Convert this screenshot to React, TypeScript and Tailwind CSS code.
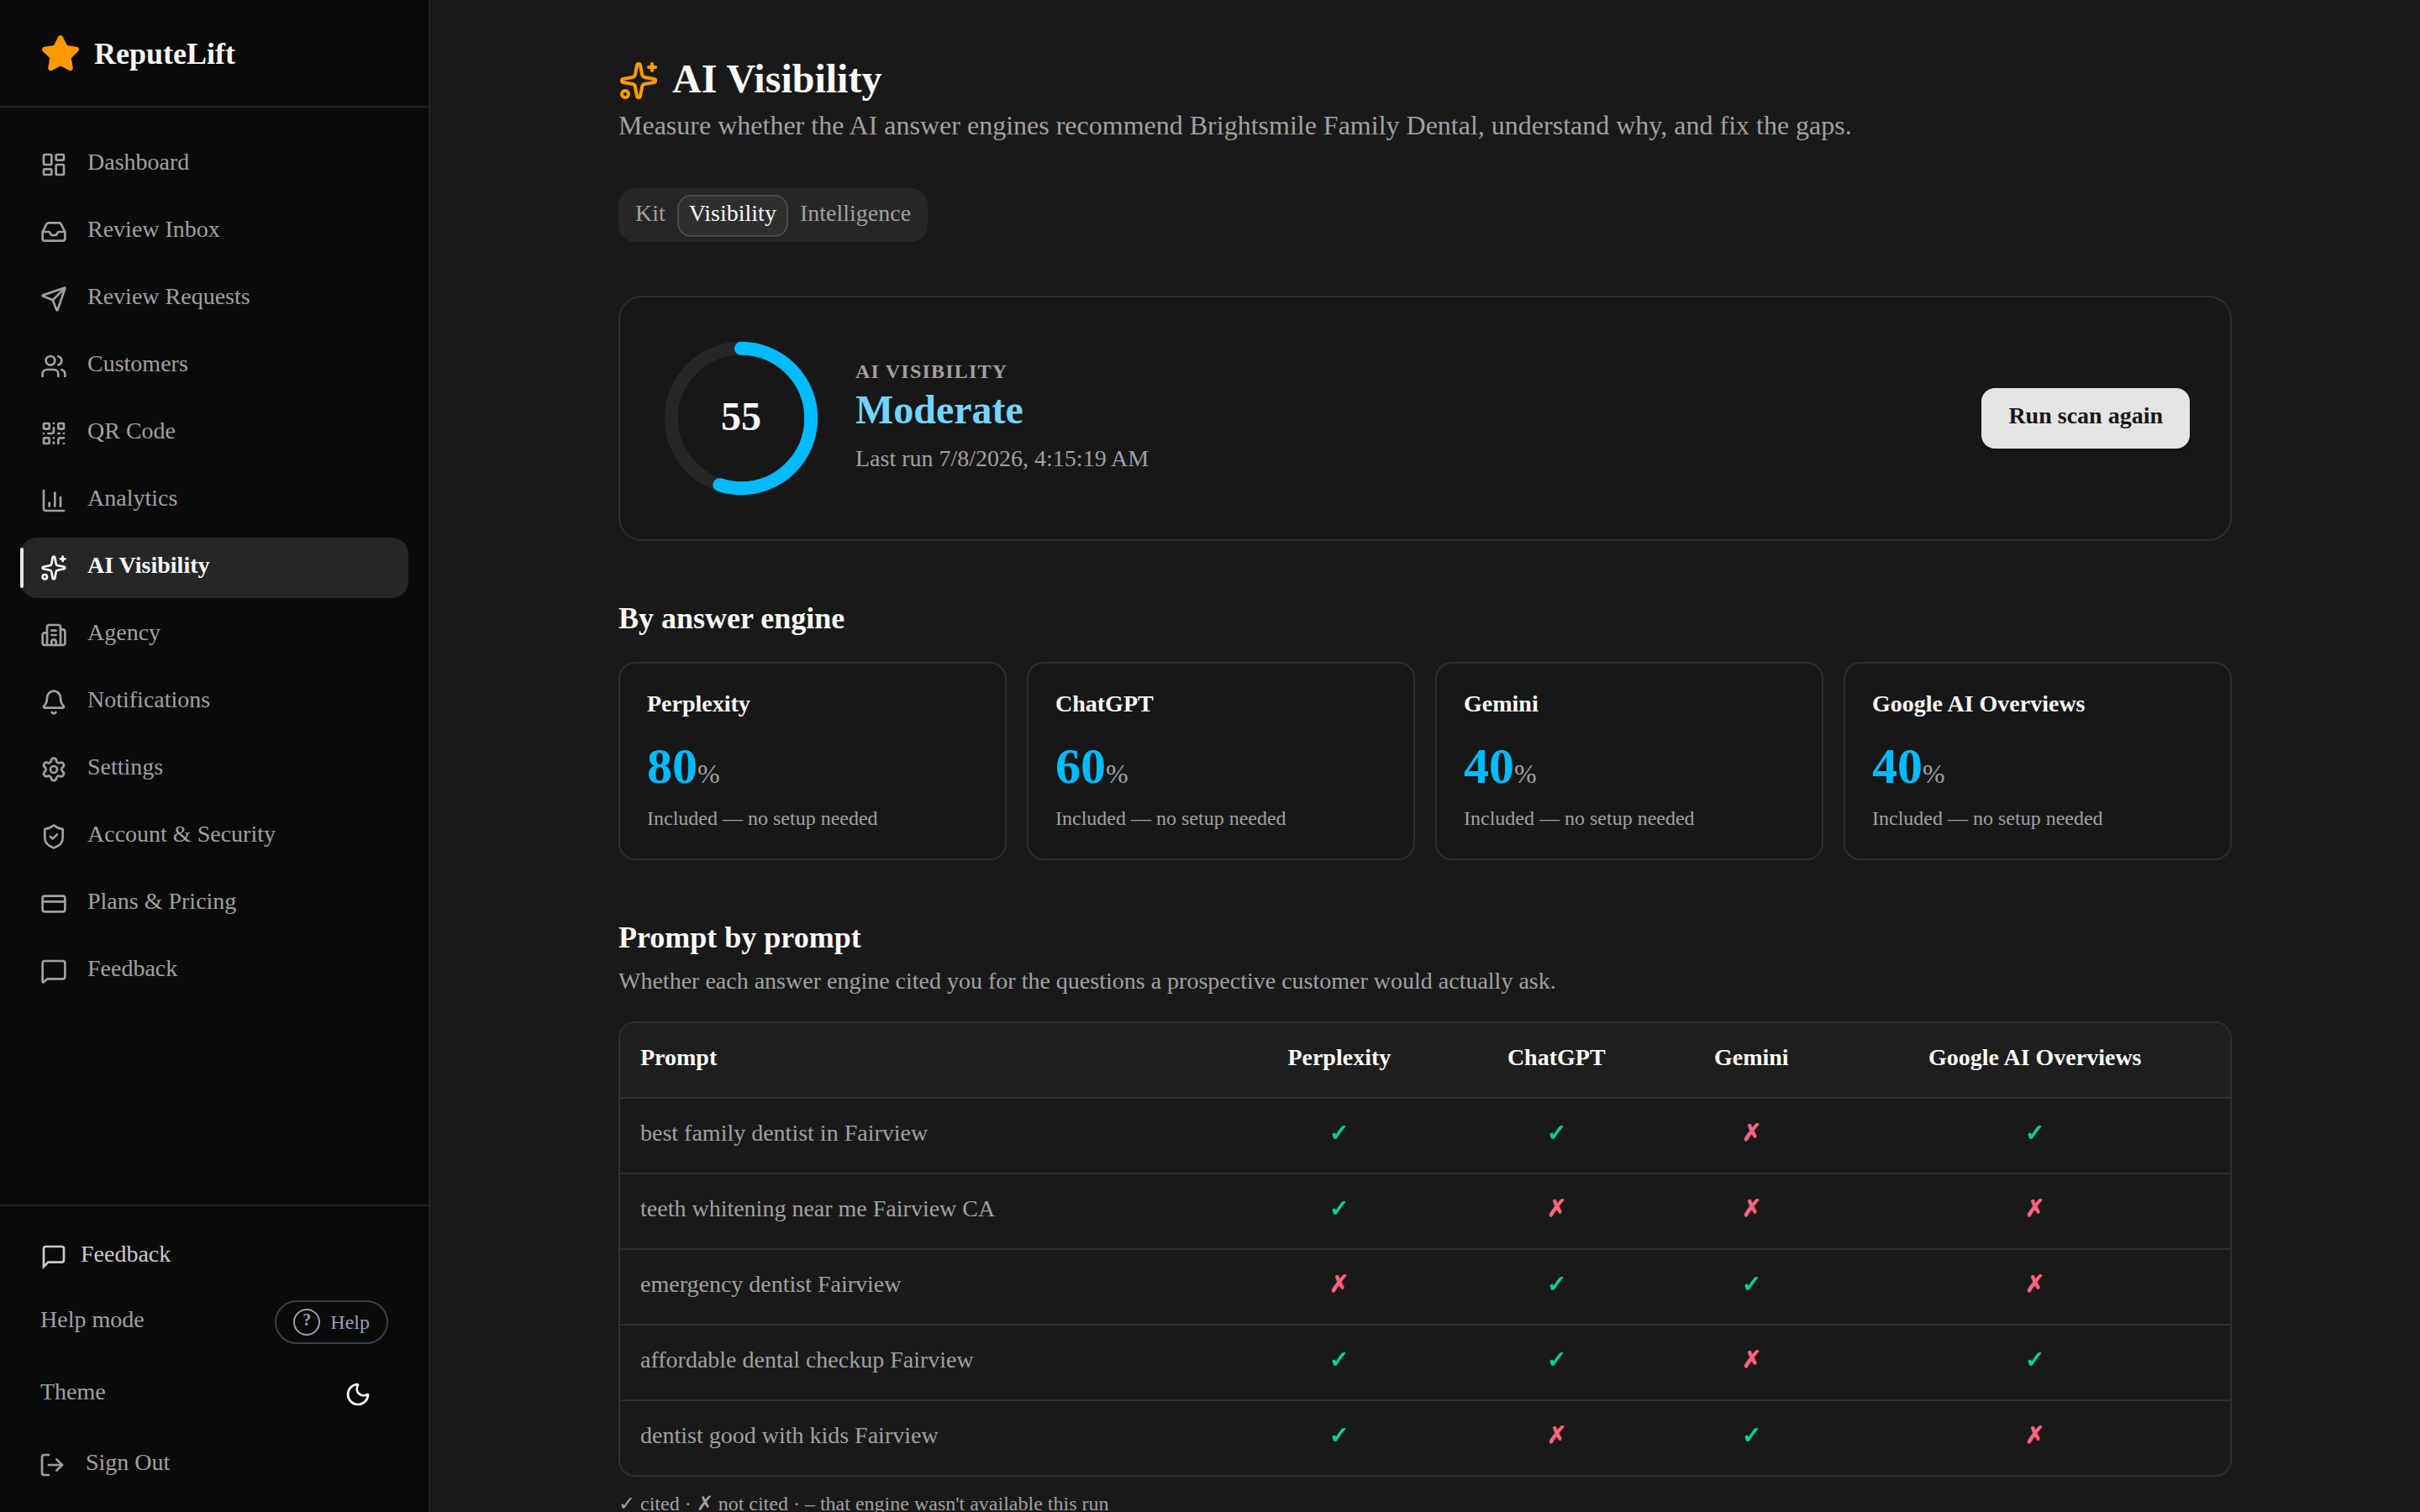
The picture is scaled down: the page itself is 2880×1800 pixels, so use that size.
import {
  Bell,
  Building2,
  ChartColumn,
  CreditCard,
  Inbox,
  LayoutDashboard,
  LogOut,
  MessageSquare,
  Moon,
  QrCode,
  Send,
  Settings,
  ShieldCheck,
  Sparkles,
  Star,
  Users,
  type LucideIcon,
} from "lucide-react";
import { clsx } from "clsx";

interface NavItem {
  label: string;
  icon: LucideIcon;
}

const navItems: NavItem[] = [
  { label: "Dashboard", icon: LayoutDashboard },
  { label: "Review Inbox", icon: Inbox },
  { label: "Review Requests", icon: Send },
  { label: "Customers", icon: Users },
  { label: "QR Code", icon: QrCode },
  { label: "Analytics", icon: ChartColumn },
  { label: "AI Visibility", icon: Sparkles },
  { label: "Agency", icon: Building2 },
  { label: "Notifications", icon: Bell },
  { label: "Settings", icon: Settings },
  { label: "Account & Security", icon: ShieldCheck },
  { label: "Plans & Pricing", icon: CreditCard },
  { label: "Feedback", icon: MessageSquare },
];

const engines = [
  { name: "Perplexity", score: 80 },
  { name: "ChatGPT", score: 60 },
  { name: "Gemini", score: 40 },
  { name: "Google AI Overviews", score: 40 },
];

const prompts = [
  { text: "best family dentist in Fairview", cited: [true, true, false, true] },
  { text: "teeth whitening near me Fairview CA", cited: [true, false, false, false] },
  { text: "emergency dentist Fairview", cited: [false, true, true, false] },
  { text: "affordable dental checkup Fairview", cited: [true, true, false, true] },
  { text: "dentist good with kids Fairview", cited: [true, false, true, false] },
];

const tabs = ["Kit", "Visibility", "Intelligence"];

function NavLink({ label, icon: Icon, active }: NavItem & { active: boolean }) {
  return (
    <a
      href="#"
      aria-current={active ? "page" : undefined}
      className={clsx(
        "relative flex h-18 items-center gap-6 rounded-[20px] px-6",
        active ? "bg-neutral-800 font-bold text-neutral-50" : "text-[#a1a1a1]"
      )}
    >
      {active && (
        <span className="absolute left-0 top-3 h-12 w-1 rounded-full bg-neutral-200" />
      )}
      <Icon className="size-8 shrink-0" />
      <span className="pb-1.5">{label}</span>
    </a>
  );
}

function FeedbackIcon() {
  return (
    <svg
      viewBox="0 0 24 24"
      fill="none"
      stroke="currentColor"
      strokeWidth="2"
      className="size-8"
      aria-hidden="true"
    >
      <path d="M21 15a2 2 0 0 1-2 2H7l-4 4V5a2 2 0 0 1 2-2h14a2 2 0 0 1 2 2z" />
    </svg>
  );
}

function Sidebar() {
  return (
    <aside className="flex h-full w-128 shrink-0 flex-col border-r-2 border-[#222222] bg-neutral-950">
      <div className="flex h-32 shrink-0 items-center gap-4 border-b-2 border-[#222222] px-12 pt-0.5">
        <Star className="size-12 fill-amber-500 text-amber-500" />
        <span className="text-4xl/14 font-bold text-neutral-50">ReputeLift</span>
      </div>

      <nav className="flex flex-1 flex-col gap-2 px-6 py-8">
        {navItems.map((item) => (
          <NavLink key={item.label} {...item} active={item.label === "AI Visibility"} />
        ))}
      </nav>

      <div className="flex flex-col gap-2 border-t-2 border-[#222222] p-6 text-[#a1a1a1]">
        <button type="button" className="flex h-18 items-center gap-4 px-6 text-[#cccccc]">
          <FeedbackIcon />
          <span className="pb-1.5">Feedback</span>
        </button>
        <div className="flex items-center justify-between px-6 py-2">
          <span className="pb-1.5">Help mode</span>
          <button
            type="button"
            className="flex h-13 items-center gap-3 rounded-full border-2 border-gray-700 px-5 text-2xl/8 text-gray-400"
          >
            <span className="flex size-8 items-center justify-center rounded-full border-2 border-gray-400 pb-1.5 text-xl/6 font-bold">
              ?
            </span>
            Help
          </button>
        </div>
        <div className="flex items-center justify-between px-6 py-2">
          <span className="pb-1.5">Theme</span>
          <button
            type="button"
            aria-label="Toggle theme"
            className="flex size-18 items-center justify-center text-neutral-50"
          >
            <Moon className="size-8" />
          </button>
        </div>
        <button type="button" className="flex h-16 items-center gap-6 px-[22px]">
          <LogOut className="size-8" />
          <span className="pb-1.5">Sign Out</span>
        </button>
      </div>
    </aside>
  );
}

function ScoreRing({ score }: { score: number }) {
  return (
    <div className="grid size-48 place-items-center">
      <svg viewBox="0 0 120 120" className="col-start-1 row-start-1 size-48 -rotate-90" fill="none">
        <circle cx="60" cy="60" r="52" strokeWidth="10" className="stroke-neutral-800" />
        <circle
          cx="60"
          cy="60"
          r="52"
          strokeWidth="10"
          strokeLinecap="round"
          pathLength="100"
          strokeDasharray={`${score} 100`}
          className="stroke-sky-400"
        />
      </svg>
      <span className="col-start-1 row-start-1 pb-1 text-5xl/15 font-bold text-neutral-50">
        {score}
      </span>
    </div>
  );
}

function ScoreCard() {
  return (
    <section className="mt-16 flex items-center gap-10 rounded-[28px] border-2 border-[#2e2e2e] bg-neutral-900 p-12">
      <ScoreRing score={55} />
      <div className="flex-1">
        <p className="text-2xl/8 font-bold tracking-wider text-[#a1a1a1]">AI VISIBILITY</p>
        <p className="text-5xl/15 font-bold text-sky-300">Moderate</p>
        <p className="mt-2 pb-1 text-[#a1a1a1]">Last run 7/8/2026, 4:15:19 AM</p>
      </div>
      <button
        type="button"
        className="h-18 rounded-2xl bg-neutral-200 px-8 pb-1.5 font-bold text-neutral-900 shadow-md"
      >
        Run scan again
      </button>
    </section>
  );
}

function EngineCards() {
  return (
    <section className="mt-16">
      <h2 className="text-4xl/14 font-bold text-neutral-50">By answer engine</h2>
      <div className="mt-6 grid grid-cols-4 gap-6">
        {engines.map((engine) => (
          <div
            key={engine.name}
            className="rounded-[20px] border-2 border-[#2e2e2e] bg-neutral-900 p-8"
          >
            <h3 className="text-[28px]/8 font-bold text-neutral-50">{engine.name}</h3>
            <p className="mt-5.5 text-6xl/18 font-bold text-sky-400">
              {engine.score}
              <span className="text-[32px]/8 font-normal text-[#a1a1a1]">%</span>
            </p>
            <p className="mt-2.5 text-2xl/8 text-[#a1a1a1]">Included — no setup needed</p>
          </div>
        ))}
      </div>
    </section>
  );
}

function PromptTable() {
  return (
    <section className="mt-16">
      <h2 className="text-4xl/14 font-bold text-neutral-50">Prompt by prompt</h2>
      <p className="mt-1 text-[#a1a1a1]">
        Whether each answer engine cited you for the questions a prospective customer would
        actually ask.
      </p>
      <div className="mt-7 overflow-hidden rounded-[20px] border-2 border-[#2e2e2e]">
        <table className="w-full">
          <thead>
            <tr className="border-b-2 border-[#2e2e2e] bg-[#1e1e1e] text-neutral-50">
              <th className="px-6 pt-[21px] pb-[27px] text-left font-bold">Prompt</th>
              {engines.map((engine) => (
                <th key={engine.name} className="px-6 pt-[21px] pb-[27px] text-center font-bold">
                  {engine.name}
                </th>
              ))}
            </tr>
          </thead>
          <tbody>
            {prompts.map((prompt) => (
              <tr key={prompt.text} className="border-b-2 border-[#2e2e2e] last:border-b-0">
                <td className="px-6 pt-[21px] pb-[27px] text-[#a1a1a1]">{prompt.text}</td>
                {prompt.cited.map((cited, i) => (
                  <td
                    key={engines[i].name}
                    className={clsx(
                      "px-6 pt-[21px] pb-[27px] text-center font-bold",
                      cited ? "text-emerald-400" : "text-rose-400"
                    )}
                  >
                    {cited ? "✓" : "✗"}
                  </td>
                ))}
              </tr>
            ))}
          </tbody>
        </table>
      </div>
      <p className="mt-4 text-2xl/8 text-[#a1a1a1]">
        ✓ cited · ✗ not cited · – that engine wasn't available this run
      </p>
    </section>
  );
}

export default function App() {
  return (
    <div className="flex h-screen overflow-hidden bg-[#191919] font-['Liberation_Serif',serif] text-[28px]/10">
      <Sidebar />
      <main className="flex-1 overflow-y-auto [scrollbar-width:none]">
        <div className="mx-auto max-w-480 py-16">
          <header>
            <h1 className="flex items-center gap-4 text-5xl/15 font-bold text-neutral-50">
              <Sparkles className="size-12 text-amber-500" />
              <span className="pb-1">AI Visibility</span>
            </h1>
            <p className="pb-1.5 text-[32px]/[42px] text-[#a1a1a1]">
              Measure whether the AI answer engines recommend Brightsmile Family Dental, understand
              why, and fix the gaps.
            </p>
          </header>

          <div
            role="tablist"
            className="mt-12 flex h-16 w-fit items-center rounded-[20px] bg-neutral-800 px-1.5 pt-0.5"
          >
            {tabs.map((tab) => (
              <button
                key={tab}
                type="button"
                role="tab"
                aria-selected={tab === "Visibility"}
                className={clsx(
                  "h-[50px] rounded-2xl border-2 px-3 pb-2.5",
                  tab === "Visibility"
                    ? "border-[#4b4b4b] bg-[#2e2e2e] text-neutral-50 shadow-sm"
                    : "border-transparent text-[#a1a1a1]"
                )}
              >
                {tab}
              </button>
            ))}
          </div>

          <ScoreCard />
          <EngineCards />
          <PromptTable />
        </div>
      </main>
    </div>
  );
}
